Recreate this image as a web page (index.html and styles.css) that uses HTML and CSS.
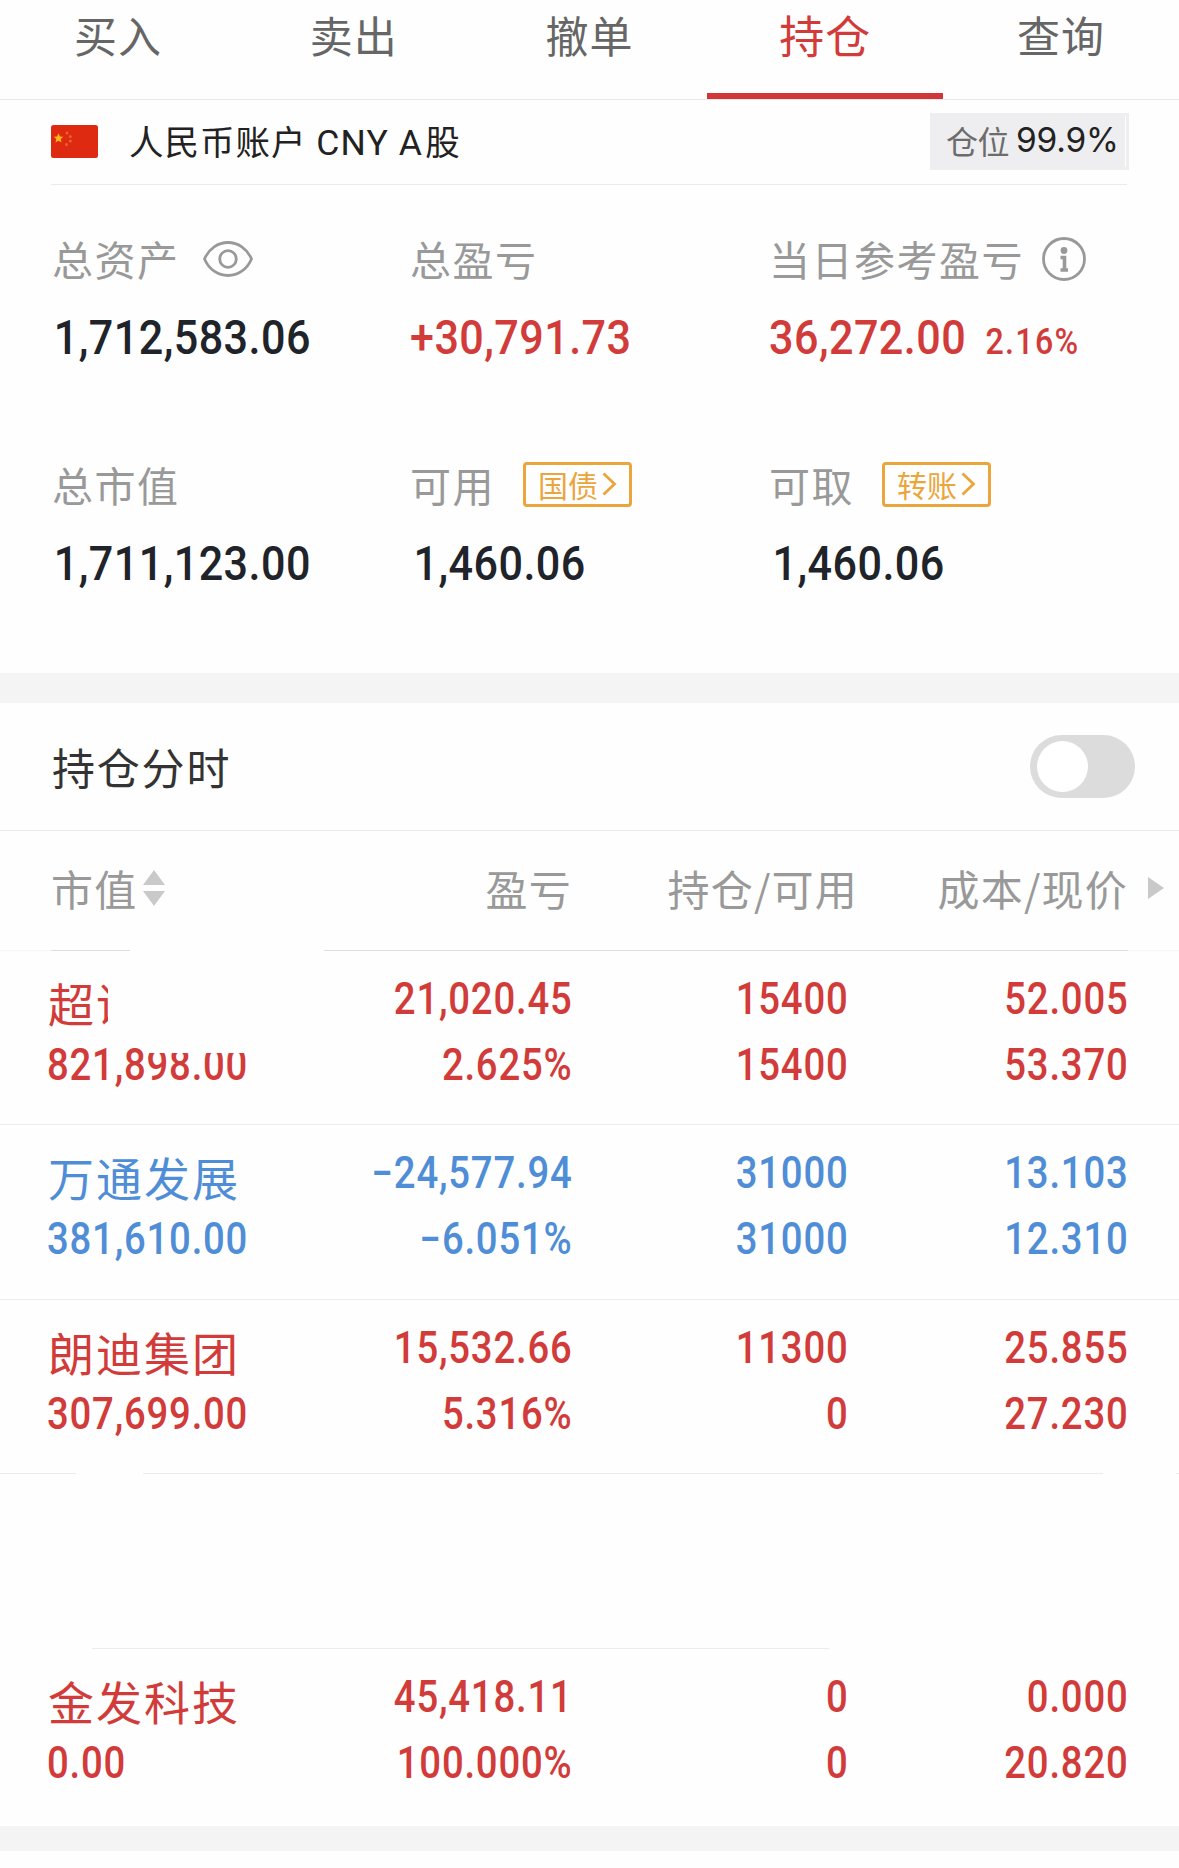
FILE: index.html
```html
<!doctype html>
<html lang="zh-CN">

<head>
	<meta charset="utf-8">
	<title>持仓</title>
	<meta name="viewport" content="width=device-width, initial-scale=1">
	<link rel="stylesheet" href="styles.css">
</head>

<body>
	<nav class="tabs">
		<a class="tab">买入</a>
		<a class="tab">卖出</a>
		<a class="tab">撤单</a>
		<a class="tab active">持仓</a>
		<a class="tab">查询</a>
	</nav>

	<section class="account">
		<svg class="flag" viewBox="0 0 47 33">
			<rect width="47" height="33" rx="2.5" fill="#dd2a10"/>
			<path fill="#fbb81c" d="M7.500 8.300l1.400 3.200 3.400.3-2.600 2.300.8 3.400-3-1.800-3 1.800.8-3.400-2.600-2.300 3.400-.3z"/>
			<g fill="#f0602a">
				<circle cx="16" cy="8" r="1.500"/>
				<circle cx="19.300" cy="11.500" r="1.500"/>
				<circle cx="19.300" cy="16" r="1.500"/>
				<circle cx="15.500" cy="19.500" r="1.500"/>
			</g>
		</svg>
		<span class="account-name">人民币账户 <span class="latin">CNY</span> <span class="latin">A</span>股</span>
		<span class="ratio"><span class="ratio-label">仓位</span><span class="ratio-value">99.9%</span></span>
	</section>

	<section class="summary">
		<div class="stat">
			<div class="label">总资产
				<svg class="eye" viewBox="0 0 50 36" fill="none" stroke="#999" stroke-width="2.800">
					<path d="M1.500 18C6 7.500 15 1.500 25 1.500S44 7.500 48.500 18C44 28.500 35 34.500 25 34.500S6 28.500 1.500 18z"/>
					<circle cx="25" cy="18" r="8.300"/>
				</svg>
			</div>
			<div class="value">1,712,583.06</div>
		</div>
		<div class="stat">
			<div class="label">总盈亏</div>
			<div class="value red">+30,791.73</div>
		</div>
		<div class="stat">
			<div class="label">当日参考盈亏
				<svg class="info" viewBox="0 0 44 44">
					<circle cx="22" cy="22" r="20.500" fill="none" stroke="#999" stroke-width="2.800"/>
					<circle cx="22" cy="13.500" r="3.400" fill="#999"/>
					<path d="M18.500 20.500H22.500V33M18.500 33H26" fill="none" stroke="#999" stroke-width="3.600"/>
				</svg>
			</div>
			<div class="value red">36,272.00<small>2.16%</small></div>
		</div>
		<div class="stat">
			<div class="label">总市值</div>
			<div class="value">1,711,123.00</div>
		</div>
		<div class="stat">
			<div class="label">可用
				<span class="link">国债<svg viewBox="0 0 15 24"><path d="M1.500 1.500L12.500 12 1.500 22.500"/></svg></span>
			</div>
			<div class="value indent">1,460.06</div>
		</div>
		<div class="stat">
			<div class="label">可取
				<span class="link">转账<svg viewBox="0 0 15 24"><path d="M1.500 1.500L12.500 12 1.500 22.500"/></svg></span>
			</div>
			<div class="value indent">1,460.06</div>
		</div>
	</section>

	<div class="band"></div>

	<section class="intraday">
		<span>持仓分时</span>
		<span class="switch"></span>
	</section>

	<section class="positions">
		<div class="head">
			<span class="sortable">市值<svg class="sort" viewBox="0 0 22 36"><path d="M11 0L22 15H0zM0 21H22L11 36z"/></svg></span>
			<span>盈亏</span>
			<span class="qty">持仓/可用</span>
			<span>成本/现价</span>
			<svg class="more" viewBox="0 0 16 22"><path d="M0 0L16 11 0 22z"/></svg>
		</div>
		<div class="line line-head"><i></i><i></i></div>

		<div class="row red">
			<div><p class="name cut">超讯</p><p class="masked">821,898.00</p></div>
			<div><p>21,020.45</p><p>2.625%</p></div>
			<div><p>15400</p><p>15400</p></div>
			<div><p>52.005</p><p>53.370</p></div>
		</div>
		<div class="line"></div>

		<div class="row blue">
			<div><p class="name">万通发展</p><p>381,610.00</p></div>
			<div><p>−24,577.94</p><p>−6.051%</p></div>
			<div><p>31000</p><p>31000</p></div>
			<div><p>13.103</p><p>12.310</p></div>
		</div>
		<div class="line"></div>

		<div class="row red">
			<div><p class="name">朗迪集团</p><p>307,699.00</p></div>
			<div><p>15,532.66</p><p>5.316%</p></div>
			<div><p>11300</p><p>0</p></div>
			<div><p>25.855</p><p>27.230</p></div>
		</div>
		<div class="line line-broken"><i></i><i></i><i></i></div>

		<div class="row"></div>
		<div class="line line-short"><i></i></div>

		<div class="row row-last red">
			<div><p class="name">金发科技</p><p>0.00</p></div>
			<div><p>45,418.11</p><p>100.000%</p></div>
			<div><p>0</p><p>0</p></div>
			<div><p>0.000</p><p>20.820</p></div>
		</div>
	</section>

	<div class="band band-last"></div>
</body>
</html>
```

FILE: styles.css
```css
*, *:after, *:before{
	box-sizing: border-box;
}

body{
	margin: 0;
	width: 1179px;
	height: 1868px;
	overflow: hidden;
	background: #fefefe;
	color: #333;
	font-family: "Noto Sans CJK SC", sans-serif;
}

p{
	margin: 0;
}

svg{
	display: block;
	flex: none;
}

.red{ color: #d13b39; }
.blue{ color: #4f8ed6; }

/* tabs */
.tabs{
	display: flex;
	height: 100px;
	border-bottom: 1px solid #e8e8e8;
}

.tab{
	flex: 1;
	height: 99px;
	padding-top: 3px;
	line-height: 62px;
	text-align: center;
	font-size: 43px;
	letter-spacing: 1px;
	color: #666;
}

.tab.active{
	padding-top: 4px;
	font-size: 45px;
	color: #d13b39;
	border-bottom: 6px solid #d13639;
}

/* account */
.account{
	display: flex;
	align-items: center;
	height: 85px;
	margin: 0 52px 0 51px;
	padding-bottom: 2px;
	border-bottom: 1px solid #ebebeb;
}

.flag{
	width: 47px;
	height: 33px;
}

.account-name{
	flex: 1;
	margin-left: 31px;
	padding-top: 1px;
	font-size: 34.5px;
	line-height: 50px;
	letter-spacing: 1px;
	word-spacing: 1px;
	color: #222;
}

.latin{
	font-family: Roboto, sans-serif;
	font-size: 35.5px;
	letter-spacing: 1.2px;
}

.latin + .latin{
	margin-right: 2px;
}

.ratio{
	display: flex;
	align-items: center;
	width: 199px;
	height: 57px;
	margin-right: -2px;
	padding: 0 0 2px 16px;
	background: linear-gradient(#fff, #fff) 195px 3px / 1px 51px no-repeat #eeeef0;
}

.ratio-label{
	font-size: 32px;
	line-height: 50px;
	letter-spacing: -.5px;
	color: #6c6c6c;
}

.ratio-value{
	margin-left: 7px;
	font-family: Inter, sans-serif;
	font-size: 33.5px;
	letter-spacing: -.2px;
	color: #222;
}

/* summary */
.summary{
	display: grid;
	grid-template-columns: 358px 359px auto;
	grid-template-rows: 226px 226px;
	height: 488px;
	padding: 43px 0 0 52px;
}

.label{
	display: flex;
	align-items: center;
	height: 60px;
	font-size: 41px;
	line-height: 60px;
	letter-spacing: 1.5px;
	color: #999;
}

.eye{
	width: 50px;
	height: 36px;
	margin: 2px 0 0 23px;
}

.info{
	width: 44px;
	height: 44px;
	margin: 2px 0 0 18px;
}

.link{
	display: flex;
	align-items: center;
	width: 109px;
	height: 45px;
	margin: 0 0 0 28px;
	padding-left: 12px;
	border: 3px solid #eaa53c;
	border-radius: 4px;
	font-size: 30px;
	line-height: 37px;
	letter-spacing: 0;
	color: #eaa53c;
}

.link svg{
	width: 15px;
	height: 24px;
	margin-left: 4px;
	fill: none;
	stroke: #eaa53c;
	stroke-width: 2.8;
}

/* narrow digits */
.value{
	margin-top: 20px;
	padding-left: 2px;
	font: 500 49px/60px Roboto, sans-serif;
	letter-spacing: .5px;
	white-space: nowrap;
	color: #20242a;
	transform: scaleX(.88);
	transform-origin: left;
}

.value.red{
	padding-left: 0;
	color: #d13b39;
}

.value.indent{
	padding-left: 4px;
}

.value small{
	margin-left: 22px;
	font-size: 36.5px;
	letter-spacing: 1.5px;
}

.band{
	height: 30px;
	background: #f4f4f4;
}

/* intraday switch */
.intraday{
	display: flex;
	align-items: center;
	justify-content: space-between;
	height: 128px;
	padding: 0 44px 0 52px;
	border-bottom: 1px solid #ebebeb;
	font-size: 43px;
	line-height: 60px;
	letter-spacing: 1.8px;
}

.intraday > span:first-child{
	padding-bottom: 1px;
}

.switch{
	width: 105px;
	height: 63px;
	padding: 6px 7px;
	border-radius: 32px;
	background: #dcdcdc;
}

.switch:before{
	content: "";
	display: block;
	width: 51px;
	height: 51px;
	border-radius: 50%;
	background: #fff;
}

/* positions */
.head, .row{
	display: grid;
	grid-template-columns: 260px 265px 276px 280px auto;
	padding-left: 47px;
	text-align: right;
}

.head{
	height: 119px;
	align-items: center;
	padding-bottom: 5px;
	font-size: 42px;
	line-height: 60px;
	letter-spacing: 1.2px;
	color: #999;
}

.qty{
	margin-right: -10px;
}

.sortable{
	display: flex;
	align-items: center;
	padding-left: 4px;
}

.sort{
	width: 22px;
	height: 36px;
	margin-left: 6px;
	fill: #c9c9c9;
}

.more{
	width: 16px;
	height: 22px;
	margin-left: 20px;
	fill: #c9c9c9;
}

.line{
	height: 1px;
	background: #ececec;
}

.line i{
	height: 1px;
	background: #ececec;
}

.line-head, .line-broken, .line-short{
	display: flex;
	background: none;
}

.line-head{
	padding: 0 51px;
	justify-content: space-between;
	background: linear-gradient(90deg, #f7f7f7 51px, transparent 51px 1128px, #f7f7f7 1128px);
}

.line-head i{ background: #dedede; }
.line-head i:first-child{ width: 79px; }
.line-head i:last-child{ width: 804px; }

.line-broken i:nth-child(1){ width: 76px; }
.line-broken i:nth-child(2){ width: 960px; margin-left: 67px; }
.line-broken i:nth-child(3){ width: 3px; margin-left: auto; }

.line-short{ padding-left: 92px; }
.line-short i{ width: 737px; }

.row{
	height: 173.4px;
	padding-top: 16px;
	font: 500 43.5px/66px Roboto, sans-serif;
	letter-spacing: .9px;
}

.row-last{
	height: 177px;
}

.row p{
	margin-right: -.5px;
	transform: scaleX(.88);
	transform-origin: right;
}

.row > div:first-child{
	text-align: left;
}

.row > div:first-child p{
	margin-right: 0;
	transform-origin: left;
}

.row p.name{
	height: 66px;
	padding: 2px 0 0 1px;
	font: 400 46px/66px "Noto Sans CJK SC", sans-serif;
	letter-spacing: 2px;
	transform: none;
}

.row p.cut{
	width: 61px;
	white-space: nowrap;
	overflow: hidden;
}

/* hides the top of the last digits */
.masked{
	position: relative;
}

.masked:after{
	content: "";
	position: absolute;
	left: 112px;
	top: 8px;
	width: 124px;
	height: 12px;
	background: #fefefe;
}

.band-last{
	height: 25px;
}
```
